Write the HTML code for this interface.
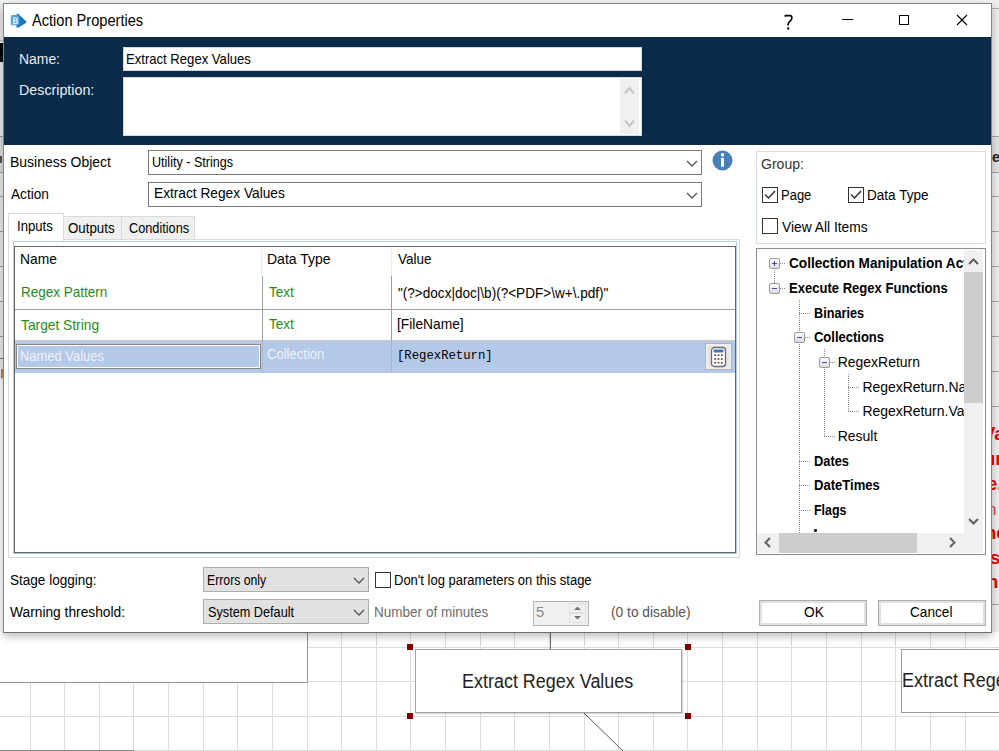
<!DOCTYPE html>
<html><head><meta charset="utf-8"><style>
html,body{margin:0;padding:0;}
body{width:999px;height:751px;position:relative;overflow:hidden;background:#fff;font-family:"Liberation Sans",sans-serif;}
body div, body span, body svg{position:absolute;box-sizing:border-box;}
span{white-space:pre;}
</style></head><body>
<div style="left:30px;top:632px;width:1px;height:119px;background:#dcdcdc"></div>
<div style="left:64px;top:632px;width:1px;height:119px;background:#dcdcdc"></div>
<div style="left:99px;top:632px;width:1px;height:119px;background:#dcdcdc"></div>
<div style="left:133px;top:632px;width:1px;height:119px;background:#dcdcdc"></div>
<div style="left:168px;top:632px;width:1px;height:119px;background:#dcdcdc"></div>
<div style="left:203px;top:632px;width:1px;height:119px;background:#dcdcdc"></div>
<div style="left:237px;top:632px;width:1px;height:119px;background:#dcdcdc"></div>
<div style="left:272px;top:632px;width:1px;height:119px;background:#dcdcdc"></div>
<div style="left:307px;top:632px;width:1px;height:119px;background:#dcdcdc"></div>
<div style="left:341px;top:632px;width:1px;height:119px;background:#dcdcdc"></div>
<div style="left:376px;top:632px;width:1px;height:119px;background:#dcdcdc"></div>
<div style="left:410px;top:632px;width:1px;height:119px;background:#dcdcdc"></div>
<div style="left:445px;top:632px;width:1px;height:119px;background:#dcdcdc"></div>
<div style="left:480px;top:632px;width:1px;height:119px;background:#dcdcdc"></div>
<div style="left:514px;top:632px;width:1px;height:119px;background:#dcdcdc"></div>
<div style="left:549px;top:632px;width:1px;height:119px;background:#dcdcdc"></div>
<div style="left:584px;top:632px;width:1px;height:119px;background:#dcdcdc"></div>
<div style="left:618px;top:632px;width:1px;height:119px;background:#dcdcdc"></div>
<div style="left:653px;top:632px;width:1px;height:119px;background:#dcdcdc"></div>
<div style="left:687px;top:632px;width:1px;height:119px;background:#dcdcdc"></div>
<div style="left:722px;top:632px;width:1px;height:119px;background:#dcdcdc"></div>
<div style="left:757px;top:632px;width:1px;height:119px;background:#dcdcdc"></div>
<div style="left:791px;top:632px;width:1px;height:119px;background:#dcdcdc"></div>
<div style="left:826px;top:632px;width:1px;height:119px;background:#dcdcdc"></div>
<div style="left:861px;top:632px;width:1px;height:119px;background:#dcdcdc"></div>
<div style="left:895px;top:632px;width:1px;height:119px;background:#dcdcdc"></div>
<div style="left:930px;top:632px;width:1px;height:119px;background:#dcdcdc"></div>
<div style="left:965px;top:632px;width:1px;height:119px;background:#dcdcdc"></div>
<div style="left:0px;top:647px;width:999px;height:1px;background:#dcdcdc"></div>
<div style="left:0px;top:681px;width:999px;height:1px;background:#dcdcdc"></div>
<div style="left:0px;top:716px;width:999px;height:1px;background:#dcdcdc"></div>
<div style="left:0px;top:750px;width:999px;height:1px;background:#dcdcdc"></div>
<div style="left:0px;top:632px;width:308px;height:51px;background:#fff;border-right:1px solid #949494;border-bottom:1px solid #949494"></div>
<div style="left:0px;top:750px;width:134px;height:1px;background:#8a8a8a"></div>
<div style="left:415px;top:649px;width:267px;height:64px;background:#fff;border:1px solid #a4a4a4;box-shadow:1px 1px 1px rgba(0,0,0,0.15)"></div>
<span style="left:462.09px;top:672.00px;font-family:'Liberation Sans';font-size:19.77px;line-height:19.77px;font-weight:400;color:#1e1e1e;transform:scaleX(0.9083);transform-origin:0 0;">Extract Regex Values</span>
<div style="left:407px;top:644px;width:6px;height:6px;background:#800000"></div>
<div style="left:685px;top:644px;width:6px;height:6px;background:#800000"></div>
<div style="left:407px;top:713px;width:6px;height:6px;background:#800000"></div>
<div style="left:685px;top:713px;width:6px;height:6px;background:#800000"></div>
<div style="left:550px;top:632px;width:1px;height:17px;background:#6a6a6a"></div>
<svg style="left:0;top:0" width="999" height="751"><line x1="584" y1="713" x2="623" y2="751" stroke="#555" stroke-width="1"/></svg>
<div style="left:901px;top:649px;width:120px;height:64px;background:#fff;border:1px solid #9a9a9a"></div>
<span style="left:901.59px;top:671.00px;font-family:'Liberation Sans';font-size:19.77px;line-height:19.77px;font-weight:400;color:#1e1e1e;transform:scaleX(0.9083);transform-origin:0 0;">Extract Regex Values</span>
<div style="left:0px;top:0px;width:999px;height:3px;background:#f3f3f3"></div>
<div style="left:0px;top:3px;width:3px;height:629px;background:#ececec"></div>
<div style="left:0px;top:40px;width:3px;height:1px;background:#bdbdbd"></div>
<div style="left:0px;top:43px;width:3px;height:19px;background:#000"></div>
<div style="left:0px;top:136px;width:3px;height:1px;background:#9a9a9a"></div>
<div style="left:0px;top:172px;width:3px;height:1px;background:#9a9a9a"></div>
<div style="left:0px;top:196px;width:3px;height:1px;background:#9a9a9a"></div>
<div style="left:0px;top:231px;width:3px;height:1px;background:#9a9a9a"></div>
<div style="left:0px;top:266px;width:3px;height:1px;background:#9a9a9a"></div>
<div style="left:0px;top:301px;width:3px;height:1px;background:#9a9a9a"></div>
<div style="left:0px;top:336px;width:3px;height:1px;background:#9a9a9a"></div>
<div style="left:0px;top:358px;width:3px;height:1px;background:#707070"></div>
<div style="left:1px;top:369px;width:2px;height:9px;background:#c08040"></div>
<div style="left:0px;top:380px;width:3px;height:252px;background:#fdfdfd"></div>
<div style="left:0px;top:137px;width:3px;height:35px;background:#dedede"></div>
<div style="left:0px;top:156px;width:2px;height:7px;background:#555"></div>
<div style="left:992px;top:0px;width:7px;height:632px;background:#efefef"></div>
<div style="left:992px;top:8px;width:7px;height:1px;background:#b0b0b0"></div>
<div style="left:992px;top:136px;width:7px;height:1px;background:#a6a6a6"></div>
<div style="left:992px;top:172px;width:7px;height:1px;background:#a6a6a6"></div>
<div style="left:992px;top:196px;width:7px;height:1px;background:#a6a6a6"></div>
<div style="left:992px;top:231px;width:7px;height:1px;background:#a6a6a6"></div>
<div style="left:992px;top:266px;width:7px;height:1px;background:#a6a6a6"></div>
<div style="left:992px;top:301px;width:7px;height:1px;background:#a6a6a6"></div>
<div style="left:992px;top:336px;width:7px;height:1px;background:#a6a6a6"></div>
<div style="left:992px;top:371px;width:7px;height:1px;background:#a6a6a6"></div>
<div style="left:992px;top:406px;width:7px;height:1px;background:#a6a6a6"></div>
<div style="left:992px;top:604px;width:7px;height:1px;background:#a6a6a6"></div>
<div style="left:992px;top:137px;width:7px;height:35px;background:#e4e4e4"></div>
<span style="left:992.00px;top:151.00px;font-family:'Liberation Sans';font-size:13.95px;line-height:13.95px;font-weight:700;color:#222;">e</span>
<span style="left:983.00px;top:425.00px;font-family:'Liberation Sans';font-size:18.5px;line-height:18.5px;font-weight:700;color:#f00000;">Va</span>
<span style="left:984.00px;top:450.00px;font-family:'Liberation Sans';font-size:18.5px;line-height:18.5px;font-weight:700;color:#f00000;">ur</span>
<span style="left:987.00px;top:475.00px;font-family:'Liberation Sans';font-size:18.5px;line-height:18.5px;font-weight:700;color:#f00000;">e.</span>
<span style="left:985.00px;top:524.00px;font-family:'Liberation Sans';font-size:18.5px;line-height:18.5px;font-weight:700;color:#f00000;">nc</span>
<span style="left:990.00px;top:549.00px;font-family:'Liberation Sans';font-size:18.5px;line-height:18.5px;font-weight:700;color:#f00000;">s</span>
<span style="left:987.00px;top:573.00px;font-family:'Liberation Sans';font-size:18.5px;line-height:18.5px;font-weight:700;color:#f00000;">n</span>
<span style="left:987.00px;top:501.00px;font-family:'Liberation Sans';font-size:17px;line-height:17px;font-weight:400;color:#e84040;">n</span>
<div style="left:3px;top:3px;width:989px;height:630px;background:#fff;border:1px solid #858585;border-bottom-color:#6e6e6e;box-shadow:0 3px 9px rgba(0,0,0,0.28)"></div>
<svg style="left:10px;top:13px" width="18" height="16" viewBox="0 0 18 16"><path d="M6.3 2.2 Q6.6 0.6 8.3 0.8 L16.2 8.4 Q16.8 9.1 16.1 9.7 L8.6 14.6 Q7.2 15.2 6.3 13.8 Z" fill="#1877c3"/><rect x="0.8" y="2" width="8.4" height="10.3" rx="1.6" fill="#5aa2dc"/><path d="M3 4.5 H6 Q8 4.5 8 6.3 Q8 7.6 6.9 7.8 Q8.3 8.1 8.3 9.5 Q8.3 11.2 6.2 11.2 H3 Z M4.4 5.7 V7.3 H5.8 Q6.6 7.3 6.6 6.5 Q6.6 5.7 5.8 5.7 Z M4.4 8.4 V10 H5.9 Q6.9 10 6.9 9.2 Q6.9 8.4 5.9 8.4 Z" fill="#dcecf9" fill-rule="evenodd"/></svg>
<span style="left:31.60px;top:12.00px;font-family:'Liberation Sans';font-size:16.13px;line-height:16.13px;font-weight:400;color:#000;transform:scaleX(0.9061);transform-origin:0 0;">Action Properties</span>
<svg style="left:780px;top:10px" width="20" height="24" viewBox="0 0 20 24"><path d="M5.4 6.8 V5.6 H10.6 Q12 5.9 11.9 8 Q11.7 9.8 9.8 11.3 Q8.2 12.6 8.2 14.2 V15.6" fill="none" stroke="#000" stroke-width="1.7"/><rect x="7.2" y="17.3" width="2" height="2.2" fill="#000"/></svg>
<div style="left:842px;top:19px;width:11px;height:1px;background:#000"></div>
<div style="left:899px;top:15px;width:10px;height:10px;border:1px solid #000"></div>
<svg style="left:956px;top:14px" width="12" height="12"><path d="M1 1 L11 11 M11 1 L1 11" stroke="#000" stroke-width="1.1"/></svg>
<div style="left:4px;top:37px;width:987px;height:108px;background:#0c2a49"></div>
<span style="left:18.66px;top:52.00px;font-family:'Liberation Sans';font-size:14.83px;line-height:14.83px;font-weight:400;color:#e8ecf0;transform:scaleX(0.9385);transform-origin:0 0;">Name:</span>
<span style="left:18.64px;top:83.00px;font-family:'Liberation Sans';font-size:14.83px;line-height:14.83px;font-weight:400;color:#e8ecf0;transform:scaleX(0.9623);transform-origin:0 0;">Description:</span>
<div style="left:123px;top:47px;width:519px;height:24px;background:#fff;border:1px solid #d4d8dc"></div>
<span style="left:125.85px;top:51.00px;font-family:'Liberation Sans';font-size:15.41px;line-height:15.41px;font-weight:400;color:#000;transform:scaleX(0.8497);transform-origin:0 0;">Extract Regex Values</span>
<div style="left:123px;top:77px;width:519px;height:59px;background:#fff;border:1px solid #d4d8dc"></div>
<div style="left:620px;top:79px;width:19px;height:55px;background:#f0f0f0"></div>
<svg style="left:620px;top:79px" width="20" height="55"><path d="M5 14.5 L9.5 9 L14 14.5" fill="none" stroke="#c4c4c4" stroke-width="2"/><path d="M5 41.5 L9.5 47 L14 41.5" fill="none" stroke="#c4c4c4" stroke-width="2"/></svg>
<span style="left:9.58px;top:154.00px;font-family:'Liberation Sans';font-size:15.12px;line-height:15.12px;font-weight:400;color:#000;transform:scaleX(0.9250);transform-origin:0 0;">Business Object</span>
<span style="left:10.50px;top:186.00px;font-family:'Liberation Sans';font-size:15.12px;line-height:15.12px;font-weight:400;color:#000;transform:scaleX(0.9017);transform-origin:0 0;">Action</span>
<div style="left:148px;top:150px;width:554px;height:25px;background:#fff;border:1px solid #7a7a7a"></div>
<span style="left:151.95px;top:155.00px;font-family:'Liberation Sans';font-size:14.83px;line-height:14.83px;font-weight:400;color:#000;transform:scaleX(0.8475);transform-origin:0 0;">Utility - Strings</span>
<svg style="left:685.5px;top:159.5px" width="12" height="8" viewBox="-1 -1 12 8"><path d="M0 0 L5 5 L10 0" fill="none" stroke="#555" stroke-width="1.3"/></svg>
<div style="left:148px;top:182px;width:554px;height:25px;background:#fff;border:1px solid #7a7a7a"></div>
<span style="left:154.30px;top:185.00px;font-family:'Liberation Sans';font-size:15.26px;line-height:15.26px;font-weight:400;color:#000;transform:scaleX(0.8987);transform-origin:0 0;">Extract Regex Values</span>
<svg style="left:685.5px;top:191.5px" width="12" height="8" viewBox="-1 -1 12 8"><path d="M0 0 L5 5 L10 0" fill="none" stroke="#555" stroke-width="1.3"/></svg>
<svg style="left:712px;top:150px" width="21" height="21" viewBox="0 0 21 21"><circle cx="10.5" cy="10.5" r="10" fill="#4a80b8"/><circle cx="10.5" cy="4.8" r="1.7" fill="#fff"/><rect x="9" y="7.8" width="3" height="9" fill="#fff"/></svg>
<div style="left:8px;top:239px;width:732px;height:319px;border:1px solid #dadada;background:#fff"></div>
<div style="left:63px;top:216px;width:59px;height:24px;background:#f0f0f0;border:1px solid #d9d9d9"></div>
<div style="left:121px;top:216px;width:74px;height:24px;background:#f0f0f0;border:1px solid #d9d9d9"></div>
<div style="left:8px;top:213px;width:56px;height:28px;background:#fff;border:1px solid #d9d9d9;border-bottom:none"></div>
<span style="left:16.99px;top:219.00px;font-family:'Liberation Sans';font-size:14.53px;line-height:14.53px;font-weight:400;color:#000;transform:scaleX(0.9064);transform-origin:0 0;">Inputs</span>
<span style="left:68.30px;top:221.00px;font-family:'Liberation Sans';font-size:14.53px;line-height:14.53px;font-weight:400;color:#000;transform:scaleX(0.9155);transform-origin:0 0;">Outputs</span>
<span style="left:129.30px;top:221.00px;font-family:'Liberation Sans';font-size:14.53px;line-height:14.53px;font-weight:400;color:#000;transform:scaleX(0.8766);transform-origin:0 0;">Conditions</span>
<div style="left:13px;top:241px;width:724px;height:313px;border:1px solid #b8cbe4;background:#fff"></div>
<div style="left:14px;top:246px;width:722px;height:307px;border:1px solid #646464;background:#fff"></div>
<div style="left:261px;top:248px;width:1px;height:28px;background:#ececec"></div>
<div style="left:391px;top:248px;width:1px;height:28px;background:#ececec"></div>
<span style="left:19.80px;top:251.00px;font-family:'Liberation Sans';font-size:15.41px;line-height:15.41px;font-weight:400;color:#000;transform:scaleX(0.8956);transform-origin:0 0;">Name</span>
<span style="left:266.69px;top:251.00px;font-family:'Liberation Sans';font-size:15.41px;line-height:15.41px;font-weight:400;color:#000;transform:scaleX(0.9089);transform-origin:0 0;">Data Type</span>
<span style="left:398.00px;top:251.00px;font-family:'Liberation Sans';font-size:15.41px;line-height:15.41px;font-weight:400;color:#000;transform:scaleX(0.8755);transform-origin:0 0;">Value</span>
<div style="left:15px;top:309px;width:720px;height:1px;background:#a0a0a0"></div>
<div style="left:15px;top:340px;width:720px;height:1px;background:#c8c8c8"></div>
<div style="left:15px;top:372px;width:720px;height:1px;background:#a0a0a0"></div>
<div style="left:262px;top:276px;width:1px;height:97px;background:#a0a0a0"></div>
<div style="left:391px;top:276px;width:1px;height:97px;background:#a0a0a0"></div>
<div style="left:15px;top:341px;width:720px;height:32px;background:#b4c8e8"></div>
<div style="left:262px;top:341px;width:1px;height:32px;background:#a8b8d0"></div>
<div style="left:391px;top:341px;width:1px;height:32px;background:#a8b8d0"></div>
<span style="left:20.91px;top:284.00px;font-family:'Liberation Sans';font-size:15.12px;line-height:15.12px;font-weight:400;color:#1e8c1e;transform:scaleX(0.8930);transform-origin:0 0;">Regex Pattern</span>
<span style="left:269.00px;top:284.00px;font-family:'Liberation Sans';font-size:15.12px;line-height:15.12px;font-weight:400;color:#1e8c1e;transform:scaleX(0.8944);transform-origin:0 0;">Text</span>
<span style="left:398.20px;top:285.00px;font-family:'Liberation Sans';font-size:15.12px;line-height:15.12px;font-weight:400;color:#000;transform:scaleX(0.8973);transform-origin:0 0;">"(?&gt;docx|doc|\b)(?&lt;PDF&gt;\w+\.pdf)"</span>
<span style="left:21.20px;top:317.00px;font-family:'Liberation Sans';font-size:15.12px;line-height:15.12px;font-weight:400;color:#1e8c1e;transform:scaleX(0.9114);transform-origin:0 0;">Target String</span>
<span style="left:269.00px;top:316.00px;font-family:'Liberation Sans';font-size:15.12px;line-height:15.12px;font-weight:400;color:#1e8c1e;transform:scaleX(0.8944);transform-origin:0 0;">Text</span>
<span style="left:397.29px;top:316.00px;font-family:'Liberation Sans';font-size:15.12px;line-height:15.12px;font-weight:400;color:#000;transform:scaleX(0.9130);transform-origin:0 0;">[FileName]</span>
<div style="left:16px;top:344px;width:245px;height:25px;border:1px solid #858585;background:#b4c8e8;box-shadow:inset 0 0 0 1px #fff"></div>
<span style="left:19.94px;top:348.00px;font-family:'Liberation Sans';font-size:15.12px;line-height:15.12px;font-weight:400;color:#eef2fa;transform:scaleX(0.8571);transform-origin:0 0;">Named Values</span>
<span style="left:267.00px;top:346.00px;font-family:'Liberation Sans';font-size:15.12px;line-height:15.12px;font-weight:400;color:#eef2fa;transform:scaleX(0.8644);transform-origin:0 0;">Collection</span>
<span style="left:396.63px;top:349.00px;font-family:'Liberation Mono';font-size:13.08px;line-height:13.08px;font-weight:400;color:#000;transform:scaleX(0.9371);transform-origin:0 0;">[RegexReturn]</span>
<div style="left:705px;top:343px;width:27px;height:27px;background:#e6e6e6;border:1px solid #b4b4b4;box-shadow:inset 0 0 0 2px #efefef"></div>
<svg style="left:710px;top:346px" width="17" height="22" viewBox="0 0 17 22"><rect x="1.5" y="1.5" width="14" height="19" rx="3" fill="#fff" stroke="#6a6a6a" stroke-width="1.3"/><rect x="3.5" y="3.5" width="10" height="3" rx="1.2" fill="#3e78b8"/><circle cx="5.2" cy="9.3" r="1.05" fill="#555"/><circle cx="5.2" cy="13.0" r="1.05" fill="#555"/><circle cx="5.2" cy="16.700000000000003" r="1.05" fill="#555"/><circle cx="8.5" cy="9.3" r="1.05" fill="#555"/><circle cx="8.5" cy="13.0" r="1.05" fill="#555"/><circle cx="8.5" cy="16.700000000000003" r="1.05" fill="#555"/><circle cx="11.8" cy="9.3" r="1.05" fill="#555"/><circle cx="11.8" cy="13.0" r="1.05" fill="#555"/><circle cx="11.8" cy="16.700000000000003" r="1.05" fill="#555"/></svg>
<div style="left:756px;top:151px;width:230px;height:93px;border:1px solid #d5dfe9;background:#fff"></div>
<span style="left:760.70px;top:157.00px;font-family:'Liberation Sans';font-size:14.24px;line-height:14.24px;font-weight:400;color:#333;transform:scaleX(0.9868);transform-origin:0 0;">Group:</span>
<div style="left:762px;top:187px;width:16px;height:16px;border:1px solid #333;background:#fff"></div>
<svg style="left:762px;top:187px" width="16" height="16" viewBox="0 0 16 16"><path d="M3 7.5 L6.5 11 L13 4" fill="none" stroke="#333" stroke-width="1.5"/></svg>
<span style="left:781.09px;top:188.00px;font-family:'Liberation Sans';font-size:14.24px;line-height:14.24px;font-weight:400;color:#000;transform:scaleX(0.9125);transform-origin:0 0;">Page</span>
<div style="left:848px;top:187px;width:16px;height:16px;border:1px solid #333;background:#fff"></div>
<svg style="left:848px;top:187px" width="16" height="16" viewBox="0 0 16 16"><path d="M3 7.5 L6.5 11 L13 4" fill="none" stroke="#333" stroke-width="1.5"/></svg>
<span style="left:867.25px;top:188.00px;font-family:'Liberation Sans';font-size:14.24px;line-height:14.24px;font-weight:400;color:#000;transform:scaleX(0.9536);transform-origin:0 0;">Data Type</span>
<div style="left:762px;top:218px;width:16px;height:16px;border:1px solid #333;background:#fff"></div>
<span style="left:782.00px;top:220.00px;font-family:'Liberation Sans';font-size:14.24px;line-height:14.24px;font-weight:400;color:#000;transform:scaleX(0.9696);transform-origin:0 0;">View All Items</span>
<div style="left:756px;top:248px;width:230px;height:307px;border:1px solid #8a9099;background:#fff"></div>
<div style="left:757px;top:249px;width:207px;height:284px;overflow:hidden;">
<div style="left:17px;top:19px;width:1px;height:15px;background:repeating-linear-gradient(to bottom,#8c8c8c 0 1px,transparent 1px 2px)"></div>
<div style="left:42px;top:51px;width:1px;height:233px;background:repeating-linear-gradient(to bottom,#8c8c8c 0 1px,transparent 1px 2px)"></div>
<div style="left:67px;top:100px;width:1px;height:87px;background:repeating-linear-gradient(to bottom,#8c8c8c 0 1px,transparent 1px 2px)"></div>
<div style="left:91px;top:125px;width:1px;height:37px;background:repeating-linear-gradient(to bottom,#8c8c8c 0 1px,transparent 1px 2px)"></div>
<div style="left:23px;top:14px;width:5px;height:1px;background:repeating-linear-gradient(to right,#8c8c8c 0 1px,transparent 1px 2px)"></div>
<div style="left:23px;top:39px;width:5px;height:1px;background:repeating-linear-gradient(to right,#8c8c8c 0 1px,transparent 1px 2px)"></div>
<div style="left:42px;top:64px;width:11px;height:1px;background:repeating-linear-gradient(to right,#8c8c8c 0 1px,transparent 1px 2px)"></div>
<div style="left:48px;top:88px;width:5px;height:1px;background:repeating-linear-gradient(to right,#8c8c8c 0 1px,transparent 1px 2px)"></div>
<div style="left:73px;top:113px;width:5px;height:1px;background:repeating-linear-gradient(to right,#8c8c8c 0 1px,transparent 1px 2px)"></div>
<div style="left:91px;top:138px;width:11px;height:1px;background:repeating-linear-gradient(to right,#8c8c8c 0 1px,transparent 1px 2px)"></div>
<div style="left:91px;top:162px;width:11px;height:1px;background:repeating-linear-gradient(to right,#8c8c8c 0 1px,transparent 1px 2px)"></div>
<div style="left:67px;top:187px;width:11px;height:1px;background:repeating-linear-gradient(to right,#8c8c8c 0 1px,transparent 1px 2px)"></div>
<div style="left:42px;top:212px;width:11px;height:1px;background:repeating-linear-gradient(to right,#8c8c8c 0 1px,transparent 1px 2px)"></div>
<div style="left:42px;top:236px;width:11px;height:1px;background:repeating-linear-gradient(to right,#8c8c8c 0 1px,transparent 1px 2px)"></div>
<div style="left:42px;top:261px;width:11px;height:1px;background:repeating-linear-gradient(to right,#8c8c8c 0 1px,transparent 1px 2px)"></div>
<span style="left:32.20px;top:8.00px;font-family:'Liberation Sans';font-size:13.95px;line-height:13.95px;font-weight:700;color:#000;transform:scaleX(0.9770);transform-origin:0 0;">Collection Manipulation Actions</span>
<div style="left:12px;top:9px;width:11px;height:11px;border:1px solid #9a9a9a;border-radius:2px;background:linear-gradient(#fdfdfd,#dcdcdc)"></div>
<div style="left:15px;top:14px;width:5px;height:1px;background:#3c4fa0"></div>
<div style="left:17px;top:12px;width:1px;height:5px;background:#3c4fa0"></div>
<span style="left:32.20px;top:33.00px;font-family:'Liberation Sans';font-size:13.95px;line-height:13.95px;font-weight:700;color:#000;transform:scaleX(0.9360);transform-origin:0 0;">Execute Regex Functions</span>
<div style="left:12px;top:34px;width:11px;height:11px;border:1px solid #9a9a9a;border-radius:2px;background:linear-gradient(#fdfdfd,#dcdcdc)"></div>
<div style="left:15px;top:39px;width:5px;height:1px;background:#3c4fa0"></div>
<span style="left:57.00px;top:58.00px;font-family:'Liberation Sans';font-size:13.95px;line-height:13.95px;font-weight:700;color:#000;transform:scaleX(0.9104);transform-origin:0 0;">Binaries</span>
<span style="left:57.00px;top:82.00px;font-family:'Liberation Sans';font-size:13.95px;line-height:13.95px;font-weight:700;color:#000;transform:scaleX(0.9314);transform-origin:0 0;">Collections</span>
<div style="left:37px;top:83px;width:11px;height:11px;border:1px solid #9a9a9a;border-radius:2px;background:linear-gradient(#fdfdfd,#dcdcdc)"></div>
<div style="left:40px;top:88px;width:5px;height:1px;background:#3c4fa0"></div>
<span style="left:80.80px;top:107.00px;font-family:'Liberation Sans';font-size:13.95px;line-height:13.95px;font-weight:400;color:#000;">RegexReturn</span>
<div style="left:62px;top:108px;width:11px;height:11px;border:1px solid #9a9a9a;border-radius:2px;background:linear-gradient(#fdfdfd,#dcdcdc)"></div>
<div style="left:65px;top:113px;width:5px;height:1px;background:#3c4fa0"></div>
<span style="left:105.40px;top:132.00px;font-family:'Liberation Sans';font-size:13.95px;line-height:13.95px;font-weight:400;color:#000;">RegexReturn.Named Values</span>
<span style="left:105.40px;top:156.00px;font-family:'Liberation Sans';font-size:13.95px;line-height:13.95px;font-weight:400;color:#000;">RegexReturn.Values</span>
<span style="left:80.80px;top:181.00px;font-family:'Liberation Sans';font-size:13.95px;line-height:13.95px;font-weight:400;color:#000;">Result</span>
<span style="left:57.00px;top:206.00px;font-family:'Liberation Sans';font-size:13.95px;line-height:13.95px;font-weight:700;color:#000;transform:scaleX(0.9212);transform-origin:0 0;">Dates</span>
<span style="left:57.00px;top:230.00px;font-family:'Liberation Sans';font-size:13.95px;line-height:13.95px;font-weight:700;color:#000;transform:scaleX(0.9378);transform-origin:0 0;">DateTimes</span>
<span style="left:57.00px;top:255.00px;font-family:'Liberation Sans';font-size:13.95px;line-height:13.95px;font-weight:700;color:#000;transform:scaleX(0.8922);transform-origin:0 0;">Flags</span>
<div style="left:57px;top:280px;width:3px;height:3px;background:#222;border-radius:1px"></div>
</div>
<div style="left:964px;top:250px;width:19px;height:283px;background:#f0f0f0"></div>
<div style="left:964px;top:272px;width:19px;height:131px;background:#cdcdcd"></div>
<svg style="left:968px;top:257px" width="11" height="9" viewBox="0 0 11 9"><path d="M1 7 L5.5 2.5 L10 7" fill="none" stroke="#606060" stroke-width="2"/></svg>
<svg style="left:968px;top:517px" width="11" height="9" viewBox="0 0 11 9"><path d="M1 2 L5.5 6.5 L10 2" fill="none" stroke="#606060" stroke-width="2"/></svg>
<div style="left:757px;top:533px;width:226px;height:20px;background:#f0f0f0"></div>
<div style="left:779px;top:533px;width:138px;height:20px;background:#cdcdcd"></div>
<svg style="left:763px;top:537px" width="9" height="11" viewBox="0 0 9 11"><path d="M7 1 L2.5 5.5 L7 10" fill="none" stroke="#606060" stroke-width="2"/></svg>
<svg style="left:948px;top:537px" width="9" height="11" viewBox="0 0 9 11"><path d="M2 1 L6.5 5.5 L2 10" fill="none" stroke="#606060" stroke-width="2"/></svg>
<span style="left:10.40px;top:573.00px;font-family:'Liberation Sans';font-size:14.39px;line-height:14.39px;font-weight:400;color:#000;transform:scaleX(0.9426);transform-origin:0 0;">Stage logging:</span>
<span style="left:10.40px;top:605.00px;font-family:'Liberation Sans';font-size:14.39px;line-height:14.39px;font-weight:400;color:#000;transform:scaleX(0.9578);transform-origin:0 0;">Warning threshold:</span>
<div style="left:203px;top:567px;width:166px;height:25px;background:#e1e1e1;border:1px solid #adadad"></div>
<span style="left:207.16px;top:573.00px;font-family:'Liberation Sans';font-size:14.53px;line-height:14.53px;font-weight:400;color:#000;transform:scaleX(0.8439);transform-origin:0 0;">Errors only</span>
<svg style="left:352.5px;top:576.5px" width="12" height="8" viewBox="-1 -1 12 8"><path d="M0 0 L5 5 L10 0" fill="none" stroke="#555" stroke-width="1.3"/></svg>
<div style="left:203px;top:599px;width:166px;height:25px;background:#e1e1e1;border:1px solid #adadad"></div>
<span style="left:208.00px;top:605.00px;font-family:'Liberation Sans';font-size:14.53px;line-height:14.53px;font-weight:400;color:#000;transform:scaleX(0.8741);transform-origin:0 0;">System Default</span>
<svg style="left:352.5px;top:608.5px" width="12" height="8" viewBox="-1 -1 12 8"><path d="M0 0 L5 5 L10 0" fill="none" stroke="#555" stroke-width="1.3"/></svg>
<div style="left:375px;top:572px;width:16px;height:16px;border:1px solid #333;background:#fff"></div>
<span style="left:394.12px;top:573.00px;font-family:'Liberation Sans';font-size:14.83px;line-height:14.83px;font-weight:400;color:#000;transform:scaleX(0.8767);transform-origin:0 0;">Don't log parameters on this stage</span>
<span style="left:373.69px;top:605.00px;font-family:'Liberation Sans';font-size:14.83px;line-height:14.83px;font-weight:400;color:#6d6d6d;transform:scaleX(0.9124);transform-origin:0 0;">Number of minutes</span>
<div style="left:533px;top:601px;width:56px;height:25px;background:#f0f0f0;border:1px solid #b4b4b4"></div>
<span style="left:536.00px;top:605.00px;font-family:'Liberation Sans';font-size:14.83px;line-height:14.83px;font-weight:400;color:#8a8a8a;">5</span>
<div style="left:569px;top:603px;width:17px;height:10px;background:#f0f0f0;border:1px solid #e0e0e0"></div>
<div style="left:569px;top:613px;width:17px;height:10px;background:#f0f0f0;border:1px solid #e0e0e0"></div>
<svg style="left:572px;top:604px" width="11" height="18" viewBox="0 0 11 18"><path d="M2 6 L5.5 2.5 L9 6 Z" fill="#707070"/><path d="M2 12 L5.5 15.5 L9 12 Z" fill="#707070"/></svg>
<span style="left:611.00px;top:605.00px;font-family:'Liberation Sans';font-size:14.83px;line-height:14.83px;font-weight:400;color:#555;transform:scaleX(0.9280);transform-origin:0 0;">(0 to disable)</span>
<div style="left:759px;top:600px;width:108px;height:26px;background:#fff;border:1px solid #adadad;box-shadow:inset 0 0 0 2px #e1e1e1"></div>
<span style="left:803.60px;top:605.00px;font-family:'Liberation Sans';font-size:14.83px;line-height:14.83px;font-weight:400;color:#000;transform:scaleX(0.9288);transform-origin:0 0;">OK</span>
<div style="left:878px;top:600px;width:108px;height:26px;background:#fff;border:1px solid #adadad;box-shadow:inset 0 0 0 2px #e1e1e1"></div>
<span style="left:909.50px;top:605.00px;font-family:'Liberation Sans';font-size:14.83px;line-height:14.83px;font-weight:400;color:#000;transform:scaleX(0.9201);transform-origin:0 0;">Cancel</span>
</body></html>
